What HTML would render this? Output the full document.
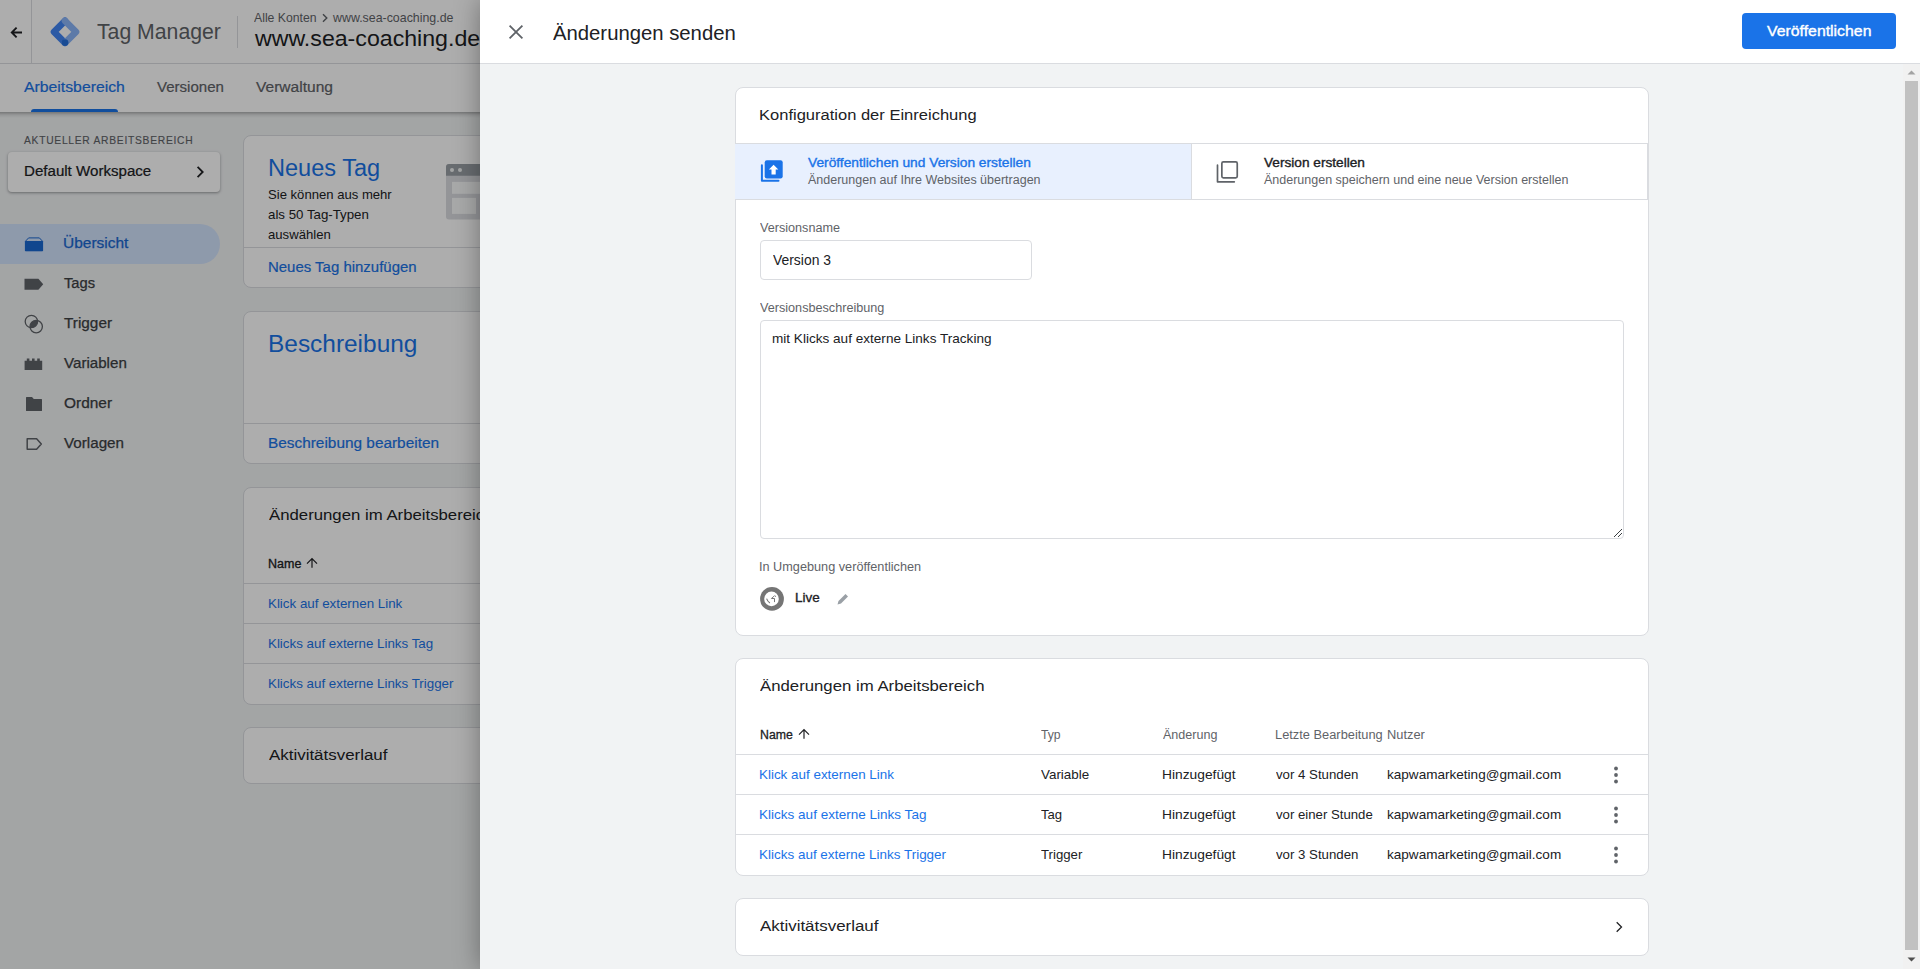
<!DOCTYPE html>
<html><head><meta charset="utf-8"><title>Tag Manager</title>
<style>
*{margin:0;padding:0;box-sizing:border-box}
html,body{width:1920px;height:969px;overflow:hidden;background:#f1f3f4;font-family:"Liberation Sans",sans-serif;position:relative}
.a{position:absolute}
.t{position:absolute;white-space:nowrap;transform-origin:0 0}
svg{position:absolute;display:block}
</style></head><body>

<div class="a" style="left:0px;top:0px;width:1920px;height:63px;background:#fff"></div>
<div class="a" style="left:0px;top:63px;width:1920px;height:1px;background:#dadce0"></div>
<div class="a" style="left:0px;top:64px;width:1920px;height:48px;background:#fff"></div>
<div class="a" style="left:0px;top:112px;width:1920px;height:6px;background:linear-gradient(rgba(0,0,0,.28),rgba(0,0,0,.08) 50%,rgba(0,0,0,0))"></div>
<div class="a" style="left:31px;top:0px;width:1px;height:63px;background:#dadce0"></div>
<div class="a" style="left:237px;top:16px;width:1px;height:32px;background:#dadce0"></div>
<svg style="left:8px;top:20px" width="16" height="24" viewBox="0 0 16 24"><path d="M14 12.5H3.8M8.6 7.7L3.8 12.5l4.8 4.8" fill="none" stroke="#202124" stroke-width="1.9"/></svg>
<svg style="left:48px;top:15px" width="34" height="34" viewBox="0 0 34 34">
<path d="M17 5.8L6 16.8L17 27.8" fill="none" stroke="#4285f4" stroke-width="6.6" stroke-linejoin="round" stroke-linecap="round"/>
<path d="M17 5.8L28 16.8L17 27.8" fill="none" stroke="#8ab4f8" stroke-width="6.6" stroke-linejoin="round" stroke-linecap="round"/>
<circle cx="17" cy="27.6" r="3.4" fill="#246fdb"/>
</svg>
<div class="t" style="left:96.53px;top:18.35px;font-size:22.35px;line-height:28px;color:#5f6368;transform:scaleX(0.9498);">Tag Manager</div>
<div class="t" style="left:254.10px;top:9.74px;font-size:12.57px;line-height:16px;color:#5f6368;transform:scaleX(0.9748);">Alle Konten</div>
<svg style="left:320px;top:12px" width="10" height="12" viewBox="0 0 10 12"><path d="M3 2.2l3.8 3.8-3.8 3.8" fill="none" stroke="#5f6368" stroke-width="1.4"/></svg>
<div class="t" style="left:333.00px;top:9.74px;font-size:12.57px;line-height:16px;color:#5f6368;transform:scaleX(0.9856);">www.sea-coaching.de</div>
<div class="t" style="left:254.50px;top:26.15px;font-size:21.50px;line-height:27px;color:#202124;transform:scaleX(1.0766);">www.sea-coaching.de</div>
<div class="t" style="left:24.30px;top:78.76px;font-size:13.97px;line-height:17px;color:#1a73e8;-webkit-text-stroke:0.2px #1a73e8;transform:scaleX(1.1299);">Arbeitsbereich</div>
<div class="t" style="left:157.00px;top:78.76px;font-size:13.97px;line-height:17px;color:#5f6368;-webkit-text-stroke:0.2px #5f6368;transform:scaleX(1.0776);">Versionen</div>
<div class="t" style="left:256.00px;top:78.76px;font-size:13.97px;line-height:17px;color:#5f6368;-webkit-text-stroke:0.2px #5f6368;transform:scaleX(1.1136);">Verwaltung</div>
<div class="a" style="left:31px;top:109px;width:87px;height:3px;background:#1a73e8;border-radius:3px 3px 0 0"></div>
<div class="t" style="left:24.00px;top:133.23px;font-size:11.17px;line-height:14px;color:#5f6368;letter-spacing:0.8px;-webkit-text-stroke:0.15px #5f6368;transform:scaleX(0.9198);">AKTUELLER ARBEITSBEREICH</div>
<div class="a" style="left:8px;top:152px;width:212px;height:40px;background:#fff;border-radius:4px;box-shadow:0 1px 2px rgba(60,64,67,.3),0 1px 3px 1px rgba(60,64,67,.15)"></div>
<div class="t" style="left:23.92px;top:162.76px;font-size:13.97px;line-height:17px;color:#202124;-webkit-text-stroke:0.2px #202124;transform:scaleX(1.0804);">Default Workspace</div>
<svg style="left:194px;top:165px" width="12" height="14" viewBox="0 0 12 14"><path d="M3.6 1.9l5.1 5.1-5.1 5.1" fill="none" stroke="#202124" stroke-width="1.8"/></svg>
<div class="a" style="left:0px;top:224px;width:220px;height:40px;border-radius:0 20px 20px 0;background:#d2e3fc"></div>
<div class="t" style="left:63.39px;top:234.76px;font-size:13.97px;line-height:17px;color:#1967d2;-webkit-text-stroke:0.25px #1967d2;transform:scaleX(1.1082);">Übersicht</div>
<div class="t" style="left:63.74px;top:274.76px;font-size:13.97px;line-height:17px;color:#3c4043;-webkit-text-stroke:0.25px #3c4043;transform:scaleX(1.0539);">Tags</div>
<div class="t" style="left:63.73px;top:314.76px;font-size:13.97px;line-height:17px;color:#3c4043;-webkit-text-stroke:0.25px #3c4043;transform:scaleX(1.0983);">Trigger</div>
<div class="t" style="left:64.00px;top:354.76px;font-size:13.97px;line-height:17px;color:#3c4043;-webkit-text-stroke:0.25px #3c4043;transform:scaleX(1.0830);">Variablen</div>
<div class="t" style="left:63.67px;top:394.76px;font-size:13.97px;line-height:17px;color:#3c4043;-webkit-text-stroke:0.25px #3c4043;transform:scaleX(1.1059);">Ordner</div>
<div class="t" style="left:64.00px;top:434.76px;font-size:13.97px;line-height:17px;color:#3c4043;-webkit-text-stroke:0.25px #3c4043;transform:scaleX(1.0876);">Vorlagen</div>
<svg style="left:24px;top:236px" width="20" height="16" viewBox="0 0 20 16"><path d="M4.6 1.9H15.4L18.6 5.3V14.8H1.4V5.3Z" fill="none" stroke="#1967d2" stroke-width="1" stroke-linejoin="round"/><rect x="1" y="5" width="18" height="10" rx="0.6" fill="#1967d2"/></svg>
<svg style="left:24px;top:276px" width="20" height="16" viewBox="0 0 20 16"><path d="M0.5 2.8h13.9l4.8 5.4-4.8 5.5h-13.9z" fill="#5f6368"/></svg>
<svg style="left:24px;top:313px" width="20" height="22" viewBox="0 0 20 22"><defs><clipPath id="cc"><circle cx="7.4" cy="8.5" r="6.2"/></clipPath></defs><circle cx="12.2" cy="13.6" r="6.2" fill="#5f6368" clip-path="url(#cc)"/><circle cx="7.4" cy="8.5" r="6.2" fill="none" stroke="#5f6368" stroke-width="1.3"/><circle cx="12.2" cy="13.6" r="6.2" fill="none" stroke="#5f6368" stroke-width="1.3"/></svg>
<svg style="left:24px;top:356px" width="20" height="16" viewBox="0 0 20 16"><path d="M0.6 4.8h2.2V2.5h2.6v2.3h2.6V2.5h2.6v2.3h2.6V2.5h2.6v2.3h2.4V14H0.6z" fill="#5f6368"/></svg>
<svg style="left:24px;top:395px" width="20" height="18" viewBox="0 0 20 18"><path d="M2 2.6a.6.6 0 0 1 .6-.6H8L9.8 4H17.4a.6.6 0 0 1 .6.6V15.4a.6.6 0 0 1-.6.6H2.6a.6.6 0 0 1-.6-.6z" fill="#5f6368"/></svg>
<svg style="left:24px;top:436px" width="20" height="16" viewBox="0 0 20 16"><path d="M3.2 2.7H12.6L17.3 8L12.6 13.3H3.2Z" fill="none" stroke="#5f6368" stroke-width="1.5" stroke-linejoin="round"/></svg>
<div class="a" style="left:243px;top:135px;width:600px;height:153px;background:#fff;border:1px solid #dadce0;border-radius:8px;"></div>
<div class="a" style="left:243px;top:247px;width:600px;height:1px;background:#dadce0"></div>
<div class="t" style="left:268.02px;top:152.87px;font-size:23.74px;line-height:30px;color:#1a73e8;transform:scaleX(0.9918);">Neues Tag</div>
<div class="t" style="left:267.90px;top:186.59px;font-size:13.00px;line-height:16px;color:#202124;transform:scaleX(1.0070);">Sie können aus mehr</div>
<div class="t" style="left:267.89px;top:206.59px;font-size:13.00px;line-height:16px;color:#202124;transform:scaleX(1.0215);">als 50 Tag-Typen</div>
<div class="t" style="left:267.90px;top:226.59px;font-size:13.00px;line-height:16px;color:#202124;transform:scaleX(1.0098);">auswählen</div>
<div class="t" style="left:267.93px;top:258.76px;font-size:13.97px;line-height:17px;color:#1a73e8;-webkit-text-stroke:0.2px #1a73e8;transform:scaleX(1.0708);">Neues Tag hinzufügen</div>
<svg style="left:446px;top:164px" width="60" height="56" viewBox="0 0 60 56"><rect x="0" y="0" width="60" height="55.6" rx="3" fill="#dadce0"/><path d="M0 3a3 3 0 0 1 3-3h54a3 3 0 0 1 3 3v8.7H0z" fill="#9aa0a6"/><circle cx="6" cy="5.9" r="2" fill="#f1f3f4"/><circle cx="14" cy="5.9" r="2" fill="#f1f3f4"/><rect x="6" y="17.9" width="48" height="11.9" fill="#f8f9fa"/><rect x="6" y="33.9" width="24" height="16" fill="#f8f9fa"/></svg>
<div class="a" style="left:243px;top:311px;width:600px;height:153px;background:#fff;border:1px solid #dadce0;border-radius:8px;"></div>
<div class="a" style="left:243px;top:423px;width:600px;height:1px;background:#dadce0"></div>
<div class="t" style="left:268.04px;top:328.87px;font-size:23.74px;line-height:30px;color:#1a73e8;transform:scaleX(1.0293);">Beschreibung</div>
<div class="t" style="left:267.90px;top:434.76px;font-size:13.97px;line-height:17px;color:#1a73e8;-webkit-text-stroke:0.2px #1a73e8;transform:scaleX(1.1010);">Beschreibung bearbeiten</div>
<div class="a" style="left:243px;top:487px;width:600px;height:218px;background:#fff;border:1px solid #dadce0;border-radius:8px;"></div>
<div class="t" style="left:268.80px;top:505.27px;font-size:15.36px;line-height:19px;color:#202124;transform:scaleX(1.0911);">Änderungen im Arbeitsbereich</div>
<div class="t" style="left:268.00px;top:555.77px;font-size:12.50px;line-height:16px;color:#202124;-webkit-text-stroke:0.3px #202124;">Name</div>
<svg style="left:305px;top:556px" width="14" height="14" viewBox="0 0 14 14"><path d="M7 11.8V2.6M2 7.6L7 2.6L12 7.6" fill="none" stroke="#202124" stroke-width="1.2"/></svg>
<div class="a" style="left:243px;top:583px;width:600px;height:1px;background:#dadce0"></div>
<div class="a" style="left:243px;top:623px;width:600px;height:1px;background:#dadce0"></div>
<div class="a" style="left:243px;top:663px;width:600px;height:1px;background:#dadce0"></div>
<div class="t" style="left:268.00px;top:594.97px;font-size:13.35px;line-height:17px;color:#1a73e8;">Klick auf externen Link</div>
<div class="t" style="left:268.00px;top:634.97px;font-size:13.35px;line-height:17px;color:#1a73e8;">Klicks auf externe Links Tag</div>
<div class="t" style="left:268.00px;top:674.97px;font-size:13.35px;line-height:17px;color:#1a73e8;">Klicks auf externe Links Trigger</div>
<div class="a" style="left:243px;top:727px;width:600px;height:57px;background:#fff;border:1px solid #dadce0;border-radius:8px;"></div>
<div class="t" style="left:268.60px;top:745.27px;font-size:15.36px;line-height:19px;color:#202124;transform:scaleX(1.1014);">Aktivitätsverlauf</div>
<div class="a" style="left:0px;top:0px;width:1920px;height:969px;background:rgba(0,0,0,.32)"></div>
<div class="a" style="left:480px;top:0;width:1440px;height:969px;background:#f1f3f4;box-shadow:0 0 24px rgba(0,0,0,.35)">
<div class="a" style="left:0px;top:0px;width:1440px;height:63px;background:#fff"></div>
<div class="a" style="left:0px;top:63px;width:1440px;height:1px;background:#dadce0"></div>
<svg style="left:27px;top:23px" width="18" height="18" viewBox="0 0 18 18"><path d="M2.6 2.6L15.4 15.4M15.4 2.6L2.6 15.4" stroke="#5f6368" stroke-width="1.8"/></svg>
<div class="a" style="left:1262px;top:13px;width:154px;height:36px;background:#1a73e8;border-radius:4px"></div>
<div class="a" style="left:1423px;top:64px;width:17px;height:905px;background:#f1f1f1"></div>
<div class="a" style="left:1425px;top:81px;width:13px;height:869px;background:#c1c1c1"></div>
<svg style="left:1426px;top:68px" width="11" height="8" viewBox="0 0 11 8"><path d="M1.5 6.5L5.5 2.5L9.5 6.5z" fill="#a3a3a3"/></svg>
<svg style="left:1426px;top:956px" width="11" height="8" viewBox="0 0 11 8"><path d="M1.5 1.5L5.5 5.5L9.5 1.5z" fill="#505050"/></svg>
</div>
<div class="t" style="left:552.50px;top:21.32px;font-size:19.55px;line-height:24px;color:#202124;transform:scaleX(1.0386);">Änderungen senden</div>
<div class="t" style="left:1767.00px;top:22.76px;font-size:13.97px;line-height:17px;color:#fff;-webkit-text-stroke:0.35px #fff;transform:scaleX(1.1332);">Veröffentlichen</div>
<div class="a" style="left:735px;top:87px;width:914px;height:549px;background:#fff;border:1px solid #dadce0;border-radius:8px;"></div>
<div class="t" style="left:759.36px;top:105.27px;font-size:15.36px;line-height:19px;color:#202124;transform:scaleX(1.0755);">Konfiguration der Einreichung</div>
<div class="a" style="left:735px;top:143px;width:457px;height:57px;background:#e8f0fe;border-top:1px solid #dadce0;border-bottom:1px solid #dadce0"></div>
<div class="a" style="left:1191px;top:143px;width:457px;height:57px;background:#fff;border:1px solid #dadce0"></div>
<svg style="left:758px;top:158px" width="26" height="26" viewBox="0 0 26 26"><path d="M3.9 7.2V22.7H20.5" fill="none" stroke="#1a73e8" stroke-width="2" stroke-linecap="round" stroke-linejoin="round"/><rect x="6.7" y="2.2" width="18" height="18.2" rx="2.2" fill="#1a73e8"/><path d="M15.6 6.8L20.3 11.5H17.7V16.4H13.5V11.5H10.9Z" fill="#fff"/></svg>
<div class="t" style="left:808.00px;top:154.66px;font-size:12.80px;line-height:16px;color:#1a73e8;-webkit-text-stroke:0.35px #1a73e8;transform:scaleX(1.0738);">Veröffentlichen und Version erstellen</div>
<div class="t" style="left:808.00px;top:171.77px;font-size:12.50px;line-height:16px;color:#5f6368;">Änderungen auf Ihre Websites übertragen</div>
<svg style="left:1214px;top:158px" width="26" height="26" viewBox="0 0 26 26"><path d="M3.5 7.2V23.8H20.3" fill="none" stroke="#5f6368" stroke-width="1.7" stroke-linecap="round" stroke-linejoin="round"/><rect x="7.85" y="3.95" width="15.4" height="15.9" rx="1.5" fill="none" stroke="#5f6368" stroke-width="1.7"/></svg>
<div class="t" style="left:1264.00px;top:154.66px;font-size:12.80px;line-height:16px;color:#202124;-webkit-text-stroke:0.35px #202124;transform:scaleX(1.0667);">Version erstellen</div>
<div class="t" style="left:1264.00px;top:171.77px;font-size:12.50px;line-height:16px;color:#5f6368;">Änderungen speichern und eine neue Version erstellen</div>
<div class="t" style="left:759.70px;top:219.77px;font-size:12.50px;line-height:16px;color:#5f6368;transform:scaleX(1.0095);">Versionsname</div>
<div class="a" style="left:760px;top:240px;width:272px;height:40px;background:#fff;border:1px solid #dadce0;border-radius:4px"></div>
<div class="t" style="left:772.80px;top:251.82px;font-size:13.80px;line-height:17px;color:#202124;transform:scaleX(1.0079);">Version 3</div>
<div class="t" style="left:759.70px;top:299.77px;font-size:12.50px;line-height:16px;color:#5f6368;transform:scaleX(1.0110);">Versionsbeschreibung</div>
<div class="a" style="left:760px;top:320px;width:864px;height:219px;background:#fff;border:1px solid #dadce0;border-radius:4px"></div>
<svg style="left:1612px;top:527px" width="11" height="11" viewBox="0 0 11 11"><path d="M10 2L2 10M10 6L6 10" stroke="#3c4043" stroke-width="1"/></svg>
<div class="t" style="left:772.05px;top:329.92px;font-size:13.50px;line-height:17px;color:#202124;transform:scaleX(1.0053);">mit Klicks auf externe Links Tracking</div>
<div class="t" style="left:759.29px;top:558.73px;font-size:12.60px;line-height:16px;color:#5f6368;transform:scaleX(1.0082);">In Umgebung veröffentlichen</div>
<svg style="left:760px;top:587px" width="24" height="24" viewBox="0 0 24 24"><circle cx="12" cy="11.9" r="11.9" fill="#757575"/><circle cx="11.5" cy="11.9" r="7.3" fill="#fff"/><path d="M6.6 11.6c.6 1.8 1.7 3.3 3.3 4.4" fill="none" stroke="#757575" stroke-width="1.1"/><path d="M11.3 11.5h3.2v3.6M11.6 11.3l1.5-1.5 .8-.3 .9-.9 1 1.2" fill="none" stroke="#757575" stroke-width="1"/></svg>
<div class="t" style="left:794.55px;top:589.66px;font-size:12.80px;line-height:16px;color:#202124;-webkit-text-stroke:0.3px #202124;transform:scaleX(1.0529);">Live</div>
<svg style="left:836px;top:592px" width="14" height="14" viewBox="0 0 14 14"><path d="M1.5 12.5l1-3.5 7-7 2.5 2.5-7 7z" fill="#9aa0a6"/></svg>
<div class="a" style="left:735px;top:658px;width:914px;height:218px;background:#fff;border:1px solid #dadce0;border-radius:8px;"></div>
<div class="t" style="left:759.80px;top:676.27px;font-size:15.36px;line-height:19px;color:#202124;transform:scaleX(1.0911);">Änderungen im Arbeitsbereich</div>
<div class="t" style="left:759.52px;top:726.77px;font-size:12.50px;line-height:16px;color:#202124;-webkit-text-stroke:0.3px #202124;transform:scaleX(0.9844);">Name</div>
<svg style="left:797px;top:727px" width="14" height="14" viewBox="0 0 14 14"><path d="M7 11.8V2.6M2 7.6L7 2.6L12 7.6" fill="none" stroke="#202124" stroke-width="1.2"/></svg>
<div class="t" style="left:1040.76px;top:726.77px;font-size:12.50px;line-height:16px;color:#5f6368;transform:scaleX(0.9744);">Typ</div>
<div class="t" style="left:1162.70px;top:726.77px;font-size:12.50px;line-height:16px;color:#5f6368;transform:scaleX(1.0037);">Änderung</div>
<div class="t" style="left:1274.57px;top:726.77px;font-size:12.50px;line-height:16px;color:#5f6368;transform:scaleX(1.0266);">Letzte Bearbeitung</div>
<div class="t" style="left:1386.67px;top:726.77px;font-size:12.50px;line-height:16px;color:#5f6368;transform:scaleX(1.0266);">Nutzer</div>
<div class="a" style="left:736px;top:754px;width:912px;height:1px;background:#dadce0"></div>
<div class="a" style="left:736px;top:794px;width:912px;height:1px;background:#dadce0"></div>
<div class="a" style="left:736px;top:834px;width:912px;height:1px;background:#dadce0"></div>
<div class="t" style="left:759.29px;top:765.97px;font-size:13.35px;line-height:17px;color:#1a73e8;transform:scaleX(1.0053);">Klick auf externen Link</div>
<div class="t" style="left:1041.00px;top:765.99px;font-size:13.30px;line-height:17px;color:#202124;transform:scaleX(1.0074);">Variable</div>
<div class="t" style="left:1161.66px;top:765.99px;font-size:13.30px;line-height:17px;color:#202124;transform:scaleX(1.0366);">Hinzugefügt</div>
<div class="t" style="left:1275.60px;top:765.99px;font-size:13.30px;line-height:17px;color:#202124;transform:scaleX(0.9951);">vor 4 Stunden</div>
<div class="t" style="left:1386.74px;top:765.95px;font-size:13.40px;line-height:17px;color:#202124;transform:scaleX(1.0120);">kapwamarketing@gmail.com</div>
<svg style="left:1606px;top:765px" width="20" height="20" viewBox="0 0 20 20"><circle cx="10" cy="3.5" r="1.9" fill="#5f6368"/><circle cx="10" cy="10" r="1.9" fill="#5f6368"/><circle cx="10" cy="16.5" r="1.9" fill="#5f6368"/></svg>
<div class="t" style="left:759.29px;top:805.97px;font-size:13.35px;line-height:17px;color:#1a73e8;transform:scaleX(1.0138);">Klicks auf externe Links Tag</div>
<div class="t" style="left:1040.75px;top:805.99px;font-size:13.30px;line-height:17px;color:#202124;transform:scaleX(0.9877);">Tag</div>
<div class="t" style="left:1161.66px;top:805.99px;font-size:13.30px;line-height:17px;color:#202124;transform:scaleX(1.0366);">Hinzugefügt</div>
<div class="t" style="left:1275.60px;top:805.99px;font-size:13.30px;line-height:17px;color:#202124;transform:scaleX(0.9918);">vor einer Stunde</div>
<div class="t" style="left:1386.74px;top:805.95px;font-size:13.40px;line-height:17px;color:#202124;transform:scaleX(1.0120);">kapwamarketing@gmail.com</div>
<svg style="left:1606px;top:805px" width="20" height="20" viewBox="0 0 20 20"><circle cx="10" cy="3.5" r="1.9" fill="#5f6368"/><circle cx="10" cy="10" r="1.9" fill="#5f6368"/><circle cx="10" cy="16.5" r="1.9" fill="#5f6368"/></svg>
<div class="t" style="left:759.29px;top:845.97px;font-size:13.35px;line-height:17px;color:#1a73e8;transform:scaleX(1.0090);">Klicks auf externe Links Trigger</div>
<div class="t" style="left:1040.75px;top:845.99px;font-size:13.30px;line-height:17px;color:#202124;transform:scaleX(0.9939);">Trigger</div>
<div class="t" style="left:1161.66px;top:845.99px;font-size:13.30px;line-height:17px;color:#202124;transform:scaleX(1.0366);">Hinzugefügt</div>
<div class="t" style="left:1275.60px;top:845.99px;font-size:13.30px;line-height:17px;color:#202124;transform:scaleX(0.9951);">vor 3 Stunden</div>
<div class="t" style="left:1386.74px;top:845.95px;font-size:13.40px;line-height:17px;color:#202124;transform:scaleX(1.0120);">kapwamarketing@gmail.com</div>
<svg style="left:1606px;top:845px" width="20" height="20" viewBox="0 0 20 20"><circle cx="10" cy="3.5" r="1.9" fill="#5f6368"/><circle cx="10" cy="10" r="1.9" fill="#5f6368"/><circle cx="10" cy="16.5" r="1.9" fill="#5f6368"/></svg>
<div class="a" style="left:735px;top:898px;width:914px;height:58px;background:#fff;border:1px solid #dadce0;border-radius:8px;"></div>
<div class="t" style="left:759.60px;top:916.27px;font-size:15.36px;line-height:19px;color:#202124;transform:scaleX(1.1014);">Aktivitätsverlauf</div>
<svg style="left:1612px;top:919px" width="14" height="16" viewBox="0 0 14 16"><path d="M4.7 3.2l4.8 4.8-4.8 4.8" fill="none" stroke="#202124" stroke-width="1.3"/></svg>
</body></html>
